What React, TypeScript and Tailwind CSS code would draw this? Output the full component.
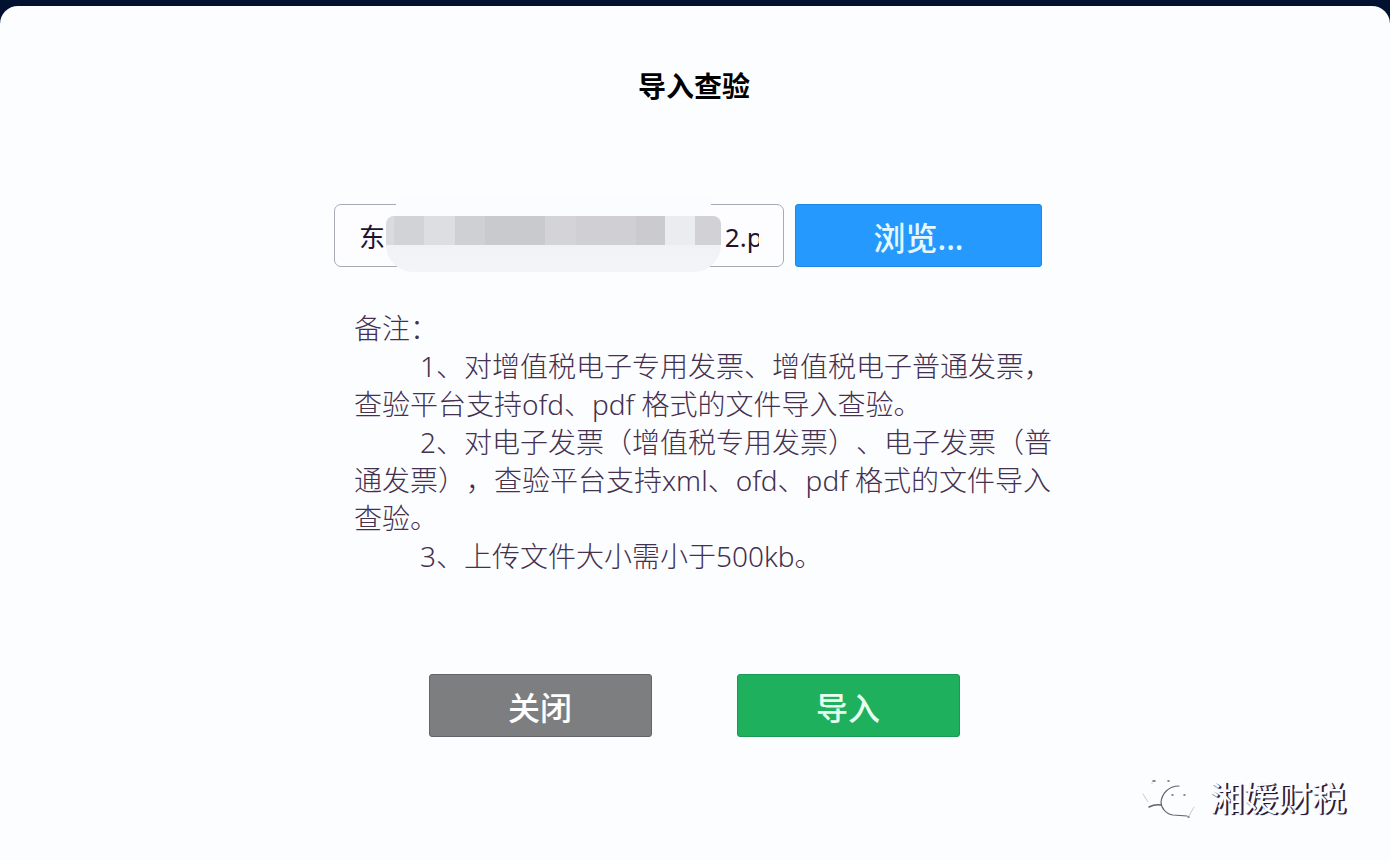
import { useState, FormEvent } from 'react';

// tramos del difuminado que tapa el nombre del archivo
const MASK_BLOCKS = [
  'w-[8px] bg-[#dadbde]',
  'w-[30px] bg-[#d2d3d7]',
  'w-[31px] bg-[#dddee2]',
  'w-[30px] bg-[#cfd0d3]',
  'w-[60px] bg-[#c9cacd]',
  'w-[31px] bg-[#d4d4d8]',
  'w-[60px] bg-[#d0d0d4]',
  'w-[29px] bg-[#cacacf]',
  'w-[30px] bg-[#ebecf0]',
  'w-[26px] bg-[#d2d2d6]',
];

const FileMask = () => (
  <div aria-hidden="true" className="absolute -top-[10px] left-[52px] w-[335px]">
    <div className="mx-[10px] h-[22px] rounded-t-[6px] bg-[#fbfcff]" />
    <div className="flex h-[29px] overflow-hidden rounded-t-[8px]">
      {MASK_BLOCKS.map((block, i) => (
        <div key={i} className={block} />
      ))}
    </div>
    <div className="h-[27px] rounded-b-[27px] bg-linear-to-b from-[#f1f2f5] to-[#f3f4f7]" />
  </div>
);

const WatermarkLogo = () => (
  <svg width="54" height="46" viewBox="0 0 54 46" fill="none" stroke="#63606c" strokeLinecap="round">
    <path d="M1 19 L6 27" stroke="#c9c9d2" />
    <path d="M7 32 Q13 29 19 30" strokeWidth="1.6" />
    <path d="M37 11 C26 11 20 19 19 27 C19 33 24 39 31 40 L45 41" strokeWidth="1.1" />
    <path d="M47 41 L52 32" stroke="#c9c9d2" />
    <path d="M46 42 L47 42" strokeWidth="1.4" />
    <path d="M11 6 L13 6 M26 6 L27 6" strokeWidth="1.6" />
    <path d="M10 8 L10 9" stroke="#c9c9d2" />
    <path d="M30 20 L31 20 M42 20 L43 20" strokeWidth="1.4" />
  </svg>
);

const App = () => {
  const [fileName, setFileName] = useState('东\u3000\u3000\u3000\u3000\u3000\u3000\u3000\u3000\u3000\u3000\u3000\u3000\u200212.pdf');

  const handleSubmit = (e: FormEvent) => {
    e.preventDefault();
  };

  return (
    <div className="flex min-h-screen flex-col bg-[#00122f] pt-[6px] font-['Noto_Sans','Noto_Sans_CJK_SC',sans-serif] [text-spacing-trim:space-all]">
      <main className="flex flex-1 flex-col rounded-t-[18px] bg-[#fcfdff] pr-[2px]">
        <h1 className="pt-[60px] text-center text-[28px] leading-[40px] font-bold text-black">导入查验</h1>

        <form onSubmit={handleSubmit} className="flex flex-col items-center pt-[98px]">
          <div className="w-full max-w-[736px] pl-2">
            <div className="flex gap-[11px]">
              <div className="relative w-[450px]">
                <input
                  type="text"
                  aria-label="文件"
                  value={fileName}
                  onChange={(e) => setFileName(e.target.value)}
                  className="h-[63px] w-full rounded-[7px] border border-[#a9a9b6] bg-[#fdfdff] px-6 text-[26px] text-[#22122f]"
                />
                <FileMask />
              </div>
              <button
                type="button"
                className="h-[63px] w-[247px] rounded-[3px] border border-[#2088e4] bg-[#2599fd] pt-1 text-[32px] font-medium text-[#e6f8ff]"
              >
                浏览...
              </button>
            </div>

            <div className="pt-[42px] pl-5 text-[28px] leading-[38px] font-light text-[#44304f]">
              <p>备注：</p>
              <p className="indent-[66px]">
                1、对增值税电子专用发票、增值税电子普通发票，查验平台支持ofd、pdf 格式的文件导入查验。
              </p>
              <p className="indent-[66px]">
                2、对电子发票（增值税专用发票）、电子发票（普通发票），查验平台支持xml、ofd、pdf 格式的文件导入查验。
              </p>
              <p className="indent-[66px]">3、上传文件大小需小于500kb。</p>
            </div>
          </div>

          <div className="flex gap-[85px] pt-[99px]">
            <button
              type="button"
              className="h-[63px] w-[223px] rounded-[3px] border border-[#646568] bg-[#7d7e80] pt-1 text-[32px] font-medium text-white"
            >
              关闭
            </button>
            <button
              type="submit"
              className="h-[63px] w-[223px] rounded-[3px] border border-[#189a53] bg-[#1eb05c] pt-1 text-[32px] font-medium text-[#e8fff0]"
            >
              导入
            </button>
          </div>
        </form>

        <footer className="mt-auto flex items-center justify-end gap-[14px] pr-[42px] pb-[39px]">
          <WatermarkLogo />
          <span className="text-[34px] leading-[46px] text-[#fcfdff] [text-shadow:1px_1px_1px_#1f1530,2px_1px_0_#3a2a4c]">
            湘媛财税
          </span>
        </footer>
      </main>
    </div>
  );
};

export default App;
